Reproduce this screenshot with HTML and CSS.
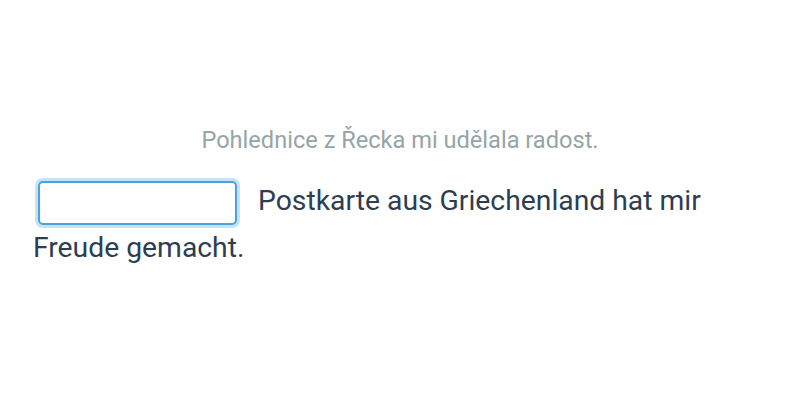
FILE: index.html
```html
<!DOCTYPE html>
<html lang="de">
<head>
<meta charset="utf-8">
<link rel="stylesheet" href="styles.css">
</head>
<body>
<main class="exercise">
  <p class="prompt">Pohlednice z Řecka mi udělala radost.</p>
  <p class="sentence"><input class="blank" type="text" aria-label="Antwort"> Postkarte aus Griechenland hat mir Freude gemacht.</p>
</main>
</body>
</html>
```

FILE: styles.css
```css
html, body {
  margin: 0;
  padding: 0;
  background: #ffffff;
}
body {
  font-family: Roboto, "Noto Sans", sans-serif;
  width: 800px;
  height: 400px;
}
.exercise {
  padding: 124px 33px 0 33px;
}
.prompt {
  margin: 0 0 22px 0;
  text-align: center;
  color: #95a5a6;
  font-size: 23.6px;
  line-height: 32px;
}
.sentence {
  margin: 0;
  color: #2c3e50;
  font-size: 28.3px;
  line-height: 46px;
}
.blank {
  box-sizing: border-box;
  width: 199px;
  height: 44px;
  margin: 0 14px 0 5px;
  vertical-align: middle;
  border: 2px solid #4aa3df;
  border-radius: 5px;
  box-shadow: 0 0 0 3px rgba(52, 152, 219, 0.28);
  outline: none;
  font: inherit;
  padding: 0 8px;
}
```
